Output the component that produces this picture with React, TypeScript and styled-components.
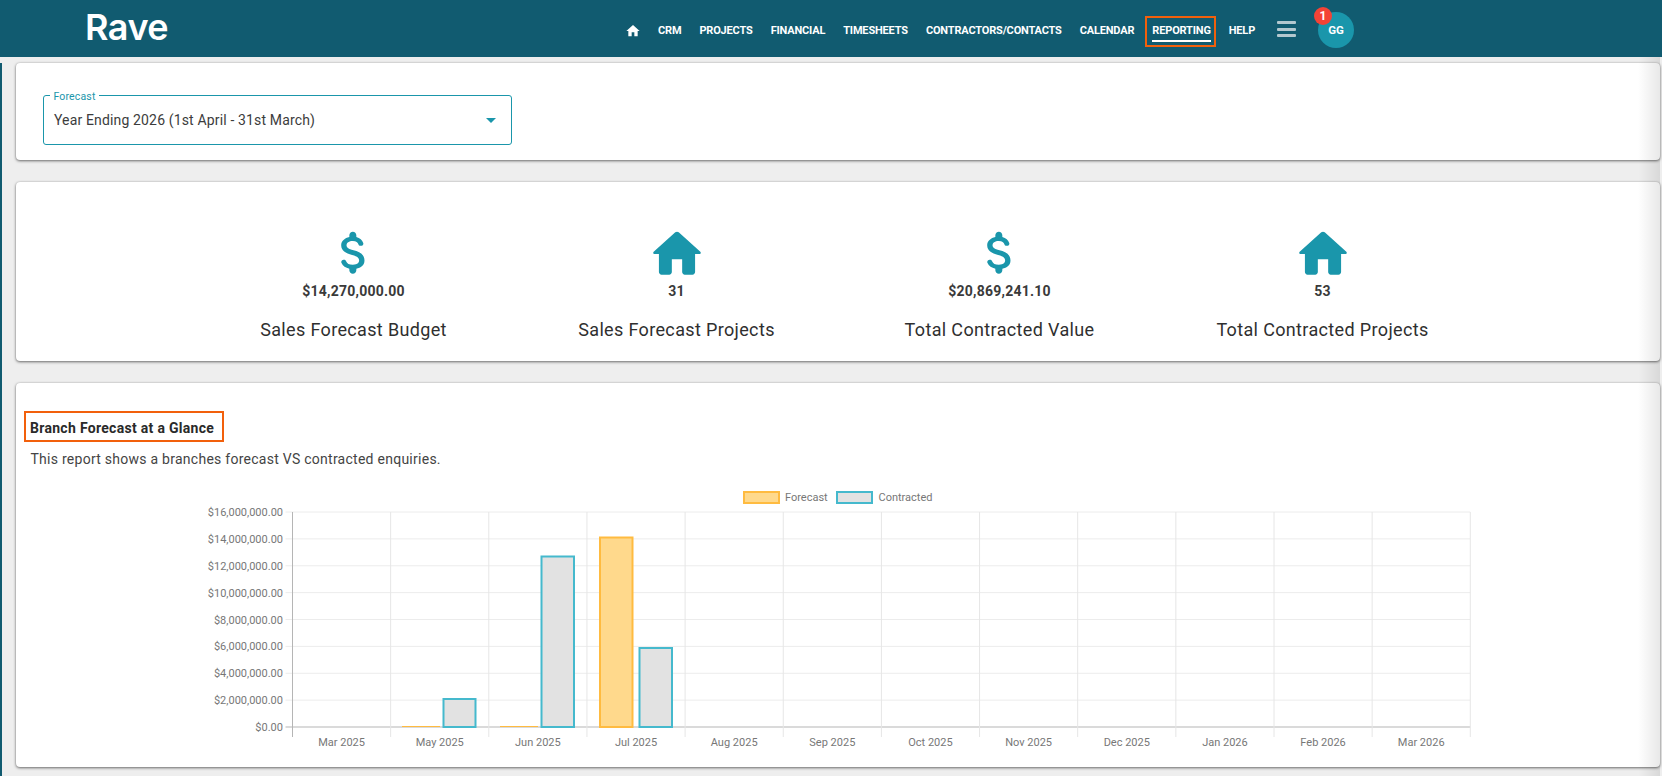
import React from "react";
import styled, { createGlobalStyle } from "styled-components";

const Global = createGlobalStyle`
  html, body { margin: 0; padding: 0; height: 100%; background: #eeeeee; overflow: hidden; }
  body { font-family: Roboto, "Liberation Sans", sans-serif; color: #333; }
  * { box-sizing: border-box; }
`;

const TEAL = "#115b70";
const ACCENT = "#1a96ab";
const ORANGE = "#f2600c";

const Page = styled.div`
  width: 1662px;
  height: 776px;
  display: flex;
  flex-direction: column;
`;

const Header = styled.header`
  height: 57px;
  flex: none;
  background: ${TEAL};
  display: flex;
  align-items: center;
  padding-left: 85px;
`;

const Logo = styled.div`
  font-family: Inter, Roboto, sans-serif;
  font-weight: 600;
  font-size: 36px;
  letter-spacing: -0.5px;
  color: #fff;
  line-height: 1;
  margin-top: -4px;
  width: 540px;
`;

const Nav = styled.nav`
  display: flex;
  align-items: center;
  gap: 18px;
  height: 100%;
`;

const NavItem = styled.a<{ $boxed?: boolean }>`
  position: relative;
  font-weight: 700;
  font-size: 11px;
  line-height: 14px;
  letter-spacing: -0.17px;
  color: #fff;
  text-transform: uppercase;
  white-space: nowrap;
  margin-top: 5px;
  ${(p) =>
    p.$boxed &&
    `
    &::before {
      content: "";
      position: absolute;
      inset: -8px -5.5px -9px -7.5px;
      border: 2px solid ${ORANGE};
    }
    &::after {
      content: "";
      position: absolute;
      left: 0;
      right: 0;
      bottom: -4px;
      height: 2px;
      background: #fff;
    }
  `}
`;

const HomeLink = styled.a`
  display: flex;
  margin-top: 5px;
  margin-right: -1px;
`;

const Burger = styled.div`
  width: 19px;
  height: 16px;
  margin-left: 4px;
  margin-top: 1px;
  display: flex;
  flex-direction: column;
  justify-content: space-between;
  & > i {
    display: block;
    height: 3px;
    border-radius: 1px;
    background: #b3c8cf;
  }
`;

const Avatar = styled.div`
  position: relative;
  width: 36px;
  height: 36px;
  border-radius: 50%;
  margin-left: 4px;
  margin-top: 3px;
  background: ${ACCENT};
  color: #fff;
  font-weight: 700;
  font-size: 11.5px;
  display: flex;
  align-items: center;
  justify-content: center;
`;

const Badge = styled.span`
  position: absolute;
  top: -5px;
  left: -4px;
  width: 18px;
  height: 18px;
  border-radius: 50%;
  background: #f44336;
  color: #fff;
  font-size: 12px;
  font-weight: 700;
  display: flex;
  align-items: center;
  justify-content: center;
`;

const Body = styled.div`
  position: relative;
  flex: 1;
  display: flex;
  padding-top: 6px;
  min-height: 0;
  &::after {
    content: "";
    position: absolute;
    top: 0;
    bottom: 0;
    right: 2px;
    width: 22px;
    pointer-events: none;
    background: linear-gradient(to right, rgba(0, 0, 0, 0), rgba(0, 0, 0, 0.09));
  }
`;

const Strip = styled.div`
  width: 2px;
  flex: none;
  background: ${TEAL};
`;

const Main = styled.main`
  flex: 1;
  padding: 0 2px 0 14px;
  display: flex;
  flex-direction: column;
  gap: 22px;
`;

const Card = styled.section`
  background: #fff;
  border-radius: 4px;
  box-shadow: 0 1px 3px rgba(0, 0, 0, 0.55), 0 0 2px rgba(0, 0, 0, 0.12);
`;

const FilterCard = styled(Card)`
  height: 97px;
  padding: 32px 0 0 26.5px;
`;

const Select = styled.div`
  position: relative;
  width: 469px;
  height: 50px;
  border: 1px solid ${ACCENT};
  border-radius: 3px;
  display: flex;
  align-items: center;
  justify-content: space-between;
  padding: 0 15px 0 10.5px;
  font-size: 14px;
  letter-spacing: 0.15px;
  color: #3c3c3c;
`;

const SelectLabel = styled.span`
  position: absolute;
  top: -4px;
  left: 6px;
  padding: 0 4px;
  background: #fff;
  color: ${ACCENT};
  font-size: 10.5px;
  line-height: 10px;
`;

const Caret = styled.span`
  width: 0;
  height: 0;
  border-left: 5.5px solid transparent;
  border-right: 5.5px solid transparent;
  border-top: 5.5px solid ${ACCENT};
`;

const StatsCard = styled(Card)`
  height: 179px;
  display: flex;
  justify-content: center;
  padding-top: 41px;
`;

const StatsGrid = styled.div`
  display: grid;
  grid-template-columns: repeat(4, 323px);
`;

const Stat = styled.div`
  display: flex;
  flex-direction: column;
  align-items: center;
`;

const StatIcon = styled.svg`
  width: 62px;
  height: 62px;
  fill: ${ACCENT};
  display: block;
`;

const StatValue = styled.div`
  margin-top: -3px;
  font-weight: 700;
  font-size: 14px;
  line-height: 18px;
  letter-spacing: 0.24px;
  color: #3a3a3a;
`;

const StatLabel = styled.div`
  margin-top: 18px;
  font-weight: 400;
  font-size: 18px;
  line-height: 24px;
  letter-spacing: 0.35px;
  color: #2f2f2f;
`;

const ChartCard = styled(Card)`
  height: 384px;
  padding: 28px 0 0 0;
`;

const TitleBox = styled.h2`
  margin: 0 0 0 8px;
  width: 200px;
  height: 31px;
  border: 2px solid ${ORANGE};
  padding: 2px 0 0 4px;
  display: flex;
  align-items: center;
  font-size: 14px;
  font-weight: 700;
  letter-spacing: 0.3px;
  color: #2a2a2a;
  white-space: nowrap;
`;

const Description = styled.p`
  margin: 8px 0 0 14.5px;
  font-size: 14px;
  line-height: 18px;
  letter-spacing: 0.26px;
  color: #444;
`;

const ChartSvg = styled.svg`
  display: block;
  margin-top: 12px;
  width: 1644px;
  height: 280px;
  font-family: Roboto, sans-serif;
  font-size: 11px;
`;

const HOME =
  "M10 19v-5h4v5c0 .55.45 1 1 1h3c.55 0 1-.45 1-1v-7h1.7c.46 0 .68-.57.33-.87L12.67 3.6c-.38-.34-.96-.34-1.34 0l-8.36 7.53c-.34.3-.13.87.33.87H5v7c0 .55.45 1 1 1h3c.55 0 1-.45 1-1z";
const MONEY =
  "M11.8 10.9c-2.27-.59-3-1.2-3-2.15 0-1.09 1.01-1.85 2.7-1.85 1.42 0 2.13.54 2.39 1.4.12.4.45.7.87.7h.3c.66 0 1.13-.65.9-1.27-.42-1.18-1.4-2.16-2.96-2.54V4.5c0-.83-.67-1.5-1.5-1.5S10 3.67 10 4.5v.66c-1.94.42-3.5 1.68-3.5 3.61 0 2.31 1.91 3.46 4.7 4.13 2.5.6 3 1.48 3 2.41 0 .69-.49 1.79-2.7 1.79-1.65 0-2.5-.59-2.83-1.43-.15-.39-.49-.67-.9-.67h-.28c-.67 0-1.14.68-.89 1.3.57 1.39 1.9 2.21 3.4 2.53v.67c0 .83.67 1.5 1.5 1.5s1.5-.67 1.5-1.5v-.65c1.95-.37 3.5-1.5 3.5-3.55 0-2.84-2.43-3.81-4.7-4.4z";

const navItems = ["CRM", "Projects", "Financial", "Timesheets", "Contractors/Contacts", "Calendar", "Reporting", "Help"];

const HOME_BOX = "0 0 24 24";
const MONEY_BOX = "-1.3 -0.8 26.6 26.6";

const stats = [
  { icon: MONEY, box: MONEY_BOX, value: "$14,270,000.00", label: "Sales Forecast Budget" },
  { icon: HOME, box: HOME_BOX, value: "31", label: "Sales Forecast Projects" },
  { icon: MONEY, box: MONEY_BOX, value: "$20,869,241.10", label: "Total Contracted Value" },
  { icon: HOME, box: HOME_BOX, value: "53", label: "Total Contracted Projects" },
];

const months = ["Mar 2025", "May 2025", "Jun 2025", "Jul 2025", "Aug 2025", "Sep 2025", "Oct 2025", "Nov 2025", "Dec 2025", "Jan 2026", "Feb 2026", "Mar 2026"];

const LEFT = 292.5;
const COL = 98.15;
const TOP = 512;
const ZERO = 727;
const STEP = (ZERO - TOP) / 8;
const yLabels = ["$16,000,000.00", "$14,000,000.00", "$12,000,000.00", "$10,000,000.00", "$8,000,000.00", "$6,000,000.00", "$4,000,000.00", "$2,000,000.00", "$0.00"];

const FORE = { fill: "#ffd98c", stroke: "#ffbb40" };
const CONT = { fill: "#e2e2e2", stroke: "#45b9cd" };

const bars = [
  { x: 443.5, w: 32, top: 699, ...CONT },
  { x: 541.5, w: 32.5, top: 556.5, ...CONT },
  { x: 600, w: 32.5, top: 537.5, ...FORE },
  { x: 639.5, w: 32.5, top: 648, ...CONT },
];

const Chart = () => (
  <ChartSvg viewBox="16 480 1644 280">
    {yLabels.map((t, i) => {
      const y = TOP + i * STEP;
      return (
        <g key={t}>
          <line x1={LEFT - 7} x2={LEFT + COL * 12} y1={y} y2={y} stroke={i === 8 ? "#b5b5b5" : "#ececec"} strokeWidth={1} />
          <text x={283} y={y + 4} textAnchor="end" fill="#777">{t}</text>
        </g>
      );
    })}
    {months.map((m, i) => (
      <g key={m + i}>
        <line x1={LEFT + i * COL} x2={LEFT + i * COL} y1={TOP} y2={737} stroke={i === 0 ? "#b5b5b5" : "#e6e6e6"} />
        <text x={LEFT + (i + 0.5) * COL} y={746} textAnchor="middle" fill="#777">{m}</text>
      </g>
    ))}
    <line x1={LEFT + 12 * COL} x2={LEFT + 12 * COL} y1={TOP} y2={737} stroke="#e6e6e6" />
    <line x1={402} x2={440} y1={726.5} y2={726.5} stroke={FORE.stroke} />
    <line x1={500} x2={538} y1={726.5} y2={726.5} stroke={FORE.stroke} />
    {bars.map((b) => (
      <rect key={b.x} x={b.x} y={b.top} width={b.w} height={ZERO - b.top} fill={b.fill} stroke={b.stroke} strokeWidth={2} />
    ))}
    <rect x={744} y={492} width={35} height={11} fill={FORE.fill} stroke={FORE.stroke} strokeWidth={2} />
    <text x={785} y={500.5} fill="#777">Forecast</text>
    <rect x={837} y={492} width={35} height={11} fill={CONT.fill} stroke={CONT.stroke} strokeWidth={2} />
    <text x={878.5} y={500.5} fill="#777">Contracted</text>
  </ChartSvg>
);

export default function App() {
  return (
    <Page>
      <Global />
      <Header>
        <Logo>Rave</Logo>
        <Nav>
          <HomeLink>
            <svg width="16" height="16" viewBox="0 0 24 24" fill="#fff"><path d="M10 20v-6h4v6h5v-8h3L12 3 2 12h3v8z" /></svg>
          </HomeLink>
          {navItems.map((n) => (
            <NavItem key={n} $boxed={n === "Reporting"}>{n}</NavItem>
          ))}
          <Burger><i /><i /><i /></Burger>
          <Avatar>GG<Badge>1</Badge></Avatar>
        </Nav>
      </Header>
      <Body>
        <Strip />
        <Main>
          <FilterCard>
            <Select>
              <SelectLabel>Forecast</SelectLabel>
              Year Ending 2026 (1st April - 31st March)
              <Caret />
            </Select>
          </FilterCard>
          <StatsCard>
            <StatsGrid>
              {stats.map((s) => (
                <Stat key={s.label}>
                  <StatIcon viewBox={s.box}><path d={s.icon} /></StatIcon>
                  <StatValue>{s.value}</StatValue>
                  <StatLabel>{s.label}</StatLabel>
                </Stat>
              ))}
            </StatsGrid>
          </StatsCard>
          <ChartCard>
            <TitleBox>Branch Forecast at a Glance</TitleBox>
            <Description>This report shows a branches forecast VS contracted enquiries.</Description>
            <Chart />
          </ChartCard>
        </Main>
      </Body>
    </Page>
  );
}
